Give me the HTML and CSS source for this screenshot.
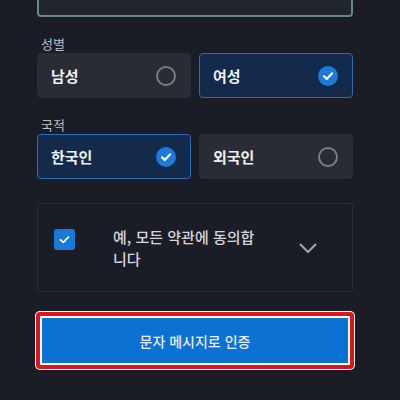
FILE: index.html
```html
<!DOCTYPE html>
<html lang="ko">
<head>
  <meta charset="UTF-8" />
  <title>본인 인증</title>
  <link rel="stylesheet" href="styles.css">
</head>
<body>
  <div class="form">
    <div class="text-field">
      <span class="placeholder">이메일 주소</span>
    </div>

    <div class="field-label">성별</div>
    <div class="choice-row">
      <div class="choice">
        <span class="choice-text">남성</span>
        <span class="radio"></span>
      </div>
      <div class="choice selected">
        <span class="choice-text">여성</span>
        <span class="radio checked">
          <svg viewBox="0 0 20 20" width="20" height="20"><path d="M6 10.3l2.7 2.6L14 7.4" fill="none" stroke="#fff" stroke-width="2.2" stroke-linecap="round" stroke-linejoin="round"/></svg>
        </span>
      </div>
    </div>

    <div class="field-label">국적</div>
    <div class="choice-row">
      <div class="choice selected">
        <span class="choice-text">한국인</span>
        <span class="radio checked">
          <svg viewBox="0 0 20 20" width="20" height="20"><path d="M6 10.3l2.7 2.6L14 7.4" fill="none" stroke="#fff" stroke-width="2.2" stroke-linecap="round" stroke-linejoin="round"/></svg>
        </span>
      </div>
      <div class="choice">
        <span class="choice-text">외국인</span>
        <span class="radio"></span>
      </div>
    </div>

    <div class="agree-box">
      <span class="checkbox">
        <svg viewBox="0 0 21 21" width="21" height="21"><path d="M6.5 10.8l2.8 2.6L14.5 8" fill="none" stroke="#fff" stroke-width="1.8" stroke-linecap="round" stroke-linejoin="round"/></svg>
      </span>
      <span class="agree-text">예, 모든 약관에 동의합니다</span>
      <svg class="chevron" viewBox="0 0 18 11" width="18" height="11"><path d="M1.5 1.5L9 9l7.5-7.5" fill="none" stroke="#a3a6b0" stroke-width="2" stroke-linecap="round" stroke-linejoin="round"/></svg>
    </div>

    <div class="submit-wrap">
      <button class="submit">문자 메시지로 인증</button>
    </div>
  </div>
</body>
</html>
```

FILE: styles.css
```css
body {
  margin: 0;
  background: #1b1d26;
  font-family: "Noto Sans CJK KR", "Noto Sans", sans-serif;
  color: #e6e7eb;
}
.form {
  width: 316px;
  margin: 0 auto 0 37px;
}
.text-field {
  height: 48px;
  margin-top: -31px;
  box-sizing: border-box;
  border: 2px solid #5f8c86;
  border-radius: 4px;
  background: #22252e;
  padding: 0 12px;
}
.placeholder {
  display: block;
  font-size: 14px;
  line-height: 20px;
  margin-top: 10px;
  color: #5d606a;
}
.field-label {
  font-size: 13px;
  line-height: 18px;
  margin-top: 18px;
  padding-left: 4px;
  color: #bcbec6;
}
.choice-row {
  display: flex;
  gap: 8px;
}
.choice {
  flex: 1;
  height: 45px;
  box-sizing: border-box;
  display: flex;
  align-items: center;
  justify-content: space-between;
  padding: 0 12px 0 13px;
  background: #2a2c35;
  border: 1px solid #2a2c35;
  border-radius: 4px;
}
.choice.selected {
  background: #132a4b;
  border-color: #2a6bbd;
}
.choice-text {
  font-size: 15px;
  font-weight: 700;
  color: #eef0f4;
}
.radio {
  width: 20px;
  height: 20px;
  box-sizing: border-box;
  border: 2px solid #7b7d85;
  border-radius: 50%;
  margin-right: 2px;
}
.radio.checked {
  border: none;
  background: #1e7ad8;
}
.radio svg {
  display: block;
}
.agree-box {
  margin-top: 24px;
  height: 89px;
  box-sizing: border-box;
  border: 1px solid #2a2d38;
  border-radius: 3px;
  display: flex;
  align-items: center;
  padding: 0 35px 0 16px;
}
.checkbox {
  width: 21px;
  height: 21px;
  border-radius: 3px;
  background: #1b78d6;
  align-self: flex-start;
  margin-top: 25px;
}
.checkbox svg {
  display: block;
}
.agree-text {
  width: 145px;
  margin-left: 38px;
  font-size: 15px;
  line-height: 22px;
  font-weight: 500;
  color: #d4d6dc;
}
.chevron {
  margin-left: auto;
  margin-top: 2px;
}
.submit-wrap {
  margin: 19px -2px 0 -2px;
  padding: 1px;
  border-radius: 5px;
  background: #fff;
}
.submit-wrap .submit {
  display: block;
  width: 100%;
  height: 57px;
  border: 4px solid #e0121c;
  box-shadow: inset 0 0 0 2px #fff;
  border-radius: 4px;
  background: #0b72d4;
  padding: 0;
  font-family: inherit;
  font-size: 14px;
  font-weight: 500;
  color: #e4edf8;
}
```
